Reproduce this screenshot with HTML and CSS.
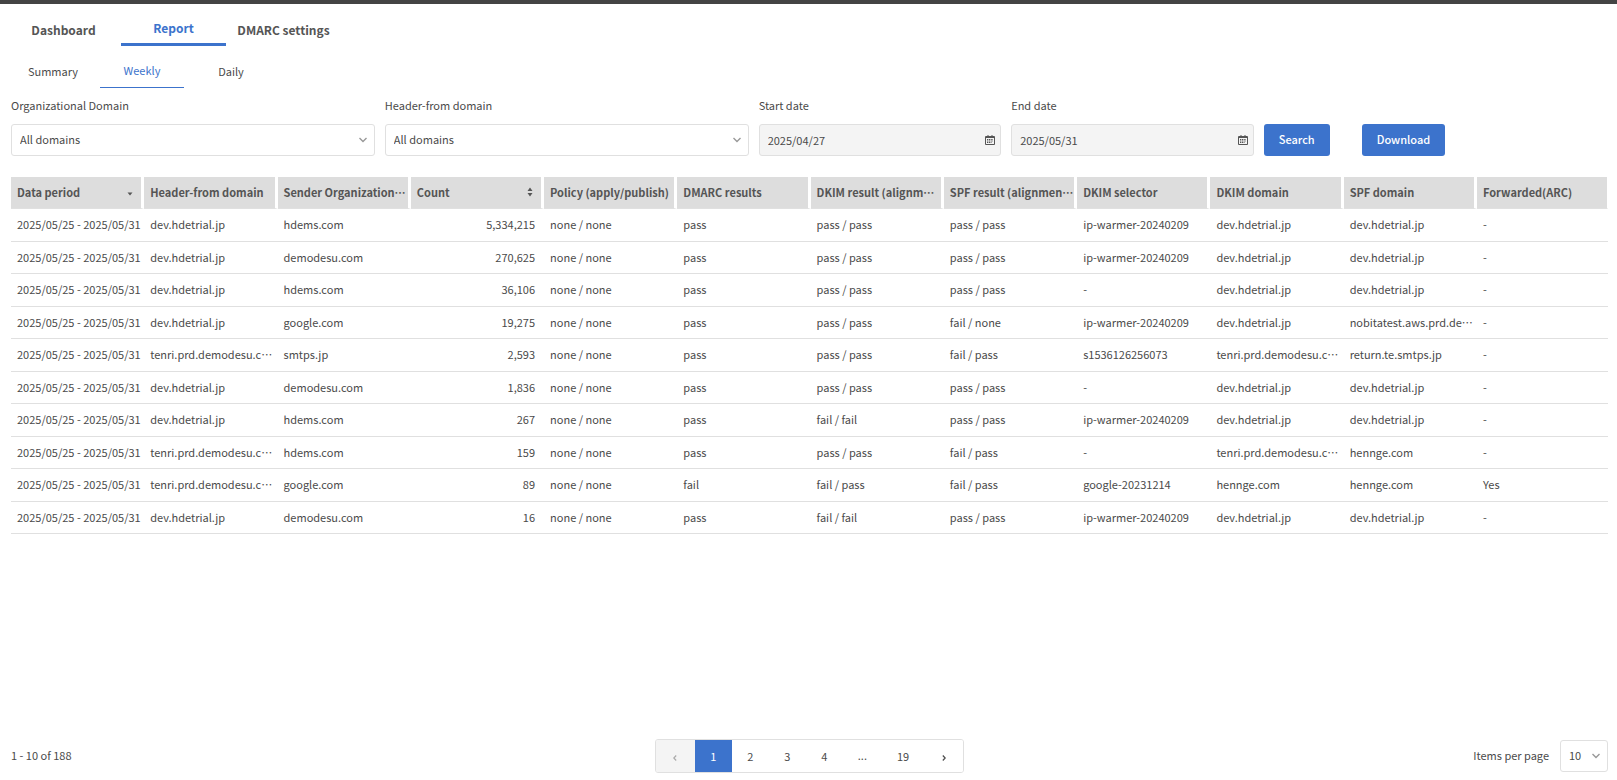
FILE: index.html
```html
<!DOCTYPE html>
<html lang="ja">
<head>
    <meta charset="utf-8">
    <title>DMARC report</title>
    <link rel="stylesheet" href="styles.css">
</head>
<body>
    <nav class="tabs">
        <a class="tab" href="#">Dashboard</a>
        <a class="tab active" href="#">Report</a>
        <a class="tab" href="#">DMARC settings</a>
    </nav>
    <nav class="subtabs">
        <a class="subtab" href="#">Summary</a>
        <a class="subtab active" href="#">Weekly</a>
        <a class="subtab" href="#">Daily</a>
    </nav>

    <form class="filters">
        <div class="field">
            <label for="org">Organizational Domain</label>
            <div class="control">
                <select id="org"><option>All domains</option></select>
                <svg class="chevron" viewBox="0 0 8 6"><path d="M.5 1 4 4.5 7.5 1"/></svg>
            </div>
        </div>
        <div class="field">
            <label for="from">Header-from domain</label>
            <div class="control">
                <select id="from"><option>All domains</option></select>
                <svg class="chevron" viewBox="0 0 8 6"><path d="M.5 1 4 4.5 7.5 1"/></svg>
            </div>
        </div>
        <div class="field date">
            <label for="start">Start date</label>
            <div class="control">
                <input type="text" id="start" value="2025/04/27">
                <svg class="calendar" viewBox="0 0 10 10"><path class="frame" d="M.5 1.5h9v8h-9zM.5 2.5h9M3 0v2M7 0v2"/><path class="days" d="M2 4.5h6M2 6h6M2 7.5h4.5"/></svg>
            </div>
        </div>
        <div class="field date">
            <label for="end">End date</label>
            <div class="control">
                <input type="text" id="end" value="2025/05/31">
                <svg class="calendar" viewBox="0 0 10 10"><path class="frame" d="M.5 1.5h9v8h-9zM.5 2.5h9M3 0v2M7 0v2"/><path class="days" d="M2 4.5h6M2 6h6M2 7.5h4.5"/></svg>
            </div>
        </div>
        <button type="button" class="btn">Search</button>
        <button type="button" class="btn download">Download</button>
    </form>

    <table class="report">
        <thead>
            <tr>
                <th><button class="sort">Data period<svg viewBox="0 0 6 10"><path d="M.5 5.5h5L3 8.5z"/></svg></button></th>
                <th>Header-from domain</th>
                <th>Sender Organization…</th>
                <th><button class="sort">Count<svg viewBox="0 0 6 10"><path d="M.5 4h5L3 .5zM.5 6h5L3 9.5z"/></svg></button></th>
                <th>Policy (apply/publish)</th>
                <th>DMARC results</th>
                <th>DKIM result (alignm…</th>
                <th>SPF result (alignmen…</th>
                <th>DKIM selector</th>
                <th>DKIM domain</th>
                <th>SPF domain</th>
                <th>Forwarded(ARC)</th>
            </tr>
        </thead>
        <tbody>
            <tr><td>2025/05/25 - 2025/05/31</td><td>dev.hdetrial.jp</td><td>hdems.com</td><td class="num">5,334,215</td><td>none / none</td><td>pass</td><td>pass / pass</td><td>pass / pass</td><td>ip-warmer-20240209</td><td>dev.hdetrial.jp</td><td>dev.hdetrial.jp</td><td>-</td></tr>
            <tr><td>2025/05/25 - 2025/05/31</td><td>dev.hdetrial.jp</td><td>demodesu.com</td><td class="num">270,625</td><td>none / none</td><td>pass</td><td>pass / pass</td><td>pass / pass</td><td>ip-warmer-20240209</td><td>dev.hdetrial.jp</td><td>dev.hdetrial.jp</td><td>-</td></tr>
            <tr><td>2025/05/25 - 2025/05/31</td><td>dev.hdetrial.jp</td><td>hdems.com</td><td class="num">36,106</td><td>none / none</td><td>pass</td><td>pass / pass</td><td>pass / pass</td><td>-</td><td>dev.hdetrial.jp</td><td>dev.hdetrial.jp</td><td>-</td></tr>
            <tr><td>2025/05/25 - 2025/05/31</td><td>dev.hdetrial.jp</td><td>google.com</td><td class="num">19,275</td><td>none / none</td><td>pass</td><td>pass / pass</td><td>fail / none</td><td>ip-warmer-20240209</td><td>dev.hdetrial.jp</td><td>nobitatest.aws.prd.de…</td><td>-</td></tr>
            <tr><td>2025/05/25 - 2025/05/31</td><td>tenri.prd.demodesu.c…</td><td>smtps.jp</td><td class="num">2,593</td><td>none / none</td><td>pass</td><td>pass / pass</td><td>fail / pass</td><td>s1536126256073</td><td>tenri.prd.demodesu.c…</td><td>return.te.smtps.jp</td><td>-</td></tr>
            <tr><td>2025/05/25 - 2025/05/31</td><td>dev.hdetrial.jp</td><td>demodesu.com</td><td class="num">1,836</td><td>none / none</td><td>pass</td><td>pass / pass</td><td>pass / pass</td><td>-</td><td>dev.hdetrial.jp</td><td>dev.hdetrial.jp</td><td>-</td></tr>
            <tr><td>2025/05/25 - 2025/05/31</td><td>dev.hdetrial.jp</td><td>hdems.com</td><td class="num">267</td><td>none / none</td><td>pass</td><td>fail / fail</td><td>pass / pass</td><td>ip-warmer-20240209</td><td>dev.hdetrial.jp</td><td>dev.hdetrial.jp</td><td>-</td></tr>
            <tr><td>2025/05/25 - 2025/05/31</td><td>tenri.prd.demodesu.c…</td><td>hdems.com</td><td class="num">159</td><td>none / none</td><td>pass</td><td>pass / pass</td><td>fail / pass</td><td>-</td><td>tenri.prd.demodesu.c…</td><td>hennge.com</td><td>-</td></tr>
            <tr><td>2025/05/25 - 2025/05/31</td><td>tenri.prd.demodesu.c…</td><td>google.com</td><td class="num">89</td><td>none / none</td><td>fail</td><td>fail / pass</td><td>fail / pass</td><td>google-20231214</td><td>hennge.com</td><td>hennge.com</td><td>Yes</td></tr>
            <tr><td>2025/05/25 - 2025/05/31</td><td>dev.hdetrial.jp</td><td>demodesu.com</td><td class="num">16</td><td>none / none</td><td>pass</td><td>fail / fail</td><td>pass / pass</td><td>ip-warmer-20240209</td><td>dev.hdetrial.jp</td><td>dev.hdetrial.jp</td><td>-</td></tr>
        </tbody>
    </table>

    <footer class="footer">
        <div class="range">1 - 10 of 188</div>
        <div class="pagination">
            <button class="page arrow" disabled aria-label="Previous"><svg viewBox="0 0 4 6"><path d="M3.2.5.8 3l2.4 2.5"/></svg></button>
            <button class="page current">1</button>
            <button class="page">2</button>
            <button class="page">3</button>
            <button class="page">4</button>
            <span class="page">...</span>
            <button class="page">19</button>
            <button class="page arrow" aria-label="Next"><svg viewBox="0 0 4 6"><path d="M.8.5 3.2 3 .8 5.5"/></svg></button>
        </div>
        <div class="perpage">
            <label for="perpage">Items per page</label>
            <div class="control">
                <select id="perpage"><option>10</option></select>
                <svg class="chevron" viewBox="0 0 8 6"><path d="M.5 1 4 4.5 7.5 1"/></svg>
            </div>
        </div>
    </footer>
</body>
</html>
```
FILE: styles.css
```css
* {
    box-sizing: border-box;
}

body {
    display: flex;
    flex-direction: column;
    min-height: 100vh;
    margin: 0;
    padding: 10px 9px 7px 11px;
    border-top: 4px solid #444;
    background-color: #fff;
    color: #4a4a4a;
    font-family: "Noto Sans CJK JP", sans-serif;
    font-size: 11px;
    line-height: 16px;
}

button, select, input {
    font: inherit;
    color: inherit;
}

button {
    border: none;
    cursor: pointer;
}

a {
    color: inherit;
    text-decoration: none;
}

.tabs, .subtabs {
    display: flex;
    gap: 5px;
    text-align: center;
    white-space: nowrap;
}

.tab {
    width: 105px;
    height: 32px;
    color: #555;
    font-size: 12px;
    font-weight: bold;
    line-height: 32px;
}

.tab.active {
    border-bottom: 3px solid #3c73cc;
    color: #3c73cc;
    line-height: 28px;
}

.subtabs {
    margin-top: 10px;
}

.subtab {
    width: 84px;
    height: 32px;
    line-height: 30px;
}

.subtab.active {
    border-bottom: 1px solid #3c73cc;
    color: #3c73cc;
    line-height: 28px;
}

.filters {
    display: flex;
    align-items: flex-end;
    gap: 10px;
    margin-top: 9px;
}

.field {
    width: 22.5vw;
}

.field.date {
    width: 15vw;
}

.field label {
    display: block;
    margin-bottom: 11px;
}

.control {
    position: relative;
}

.control select, .control input {
    display: block;
    width: 100%;
    height: 32px;
    padding: 0 8px;
    border: 1px solid #e0e0e0;
    border-radius: 3px;
    background-color: #fff;
    appearance: none;
}

.control select {
    padding-bottom: 2px;
}

.control input {
    background-color: #f4f4f4;
}

.chevron, .calendar {
    position: absolute;
    top: 13px;
    right: 8px;
    width: 8px;
    height: 6px;
    fill: none;
    stroke: #999;
    stroke-width: 1.4;
    pointer-events: none;
}

.calendar {
    top: 11px;
    right: 6px;
    width: 10px;
    height: 10px;
    stroke: #555;
    stroke-width: 1;
}

.calendar .days {
    stroke-dasharray: 1.2 .6;
}

.btn {
    height: 32px;
    padding: 0 15px 2px;
    border-radius: 3px;
    background-color: #3c73cc;
    color: #fff;
    font-weight: 500;
}

.download {
    margin-left: 22px;
}

.report {
    width: 100%;
    margin-top: 21px;
    border-collapse: separate;
    border-spacing: 0;
    table-layout: fixed;
}

.report th, .report td {
    overflow: hidden;
    height: 32px;
    padding: 0 2px 2px 6px;
    border-bottom: 1px solid #e0e0e0;
    text-align: left;
    text-overflow: ellipsis;
    white-space: nowrap;
}

/* keeps the average row at 32.5px */
.report tr:nth-child(odd) td {
    height: 33px;
}

.report th {
    padding-right: 0;
    border-right: 3px solid #fff;
    background-color: #ddd;
    color: #555;
}

.report th:last-child {
    width: 131px;
    border-right-width: 1px;
}

.report .num {
    padding-right: 9px;
    text-align: right;
}

.sort {
    display: flex;
    align-items: center;
    justify-content: space-between;
    width: 100%;
    padding: 0 8px 0 0;
    background: none;
}

.sort svg {
    width: 6px;
    height: 10px;
    fill: #555;
}

.footer {
    display: grid;
    grid-template-columns: 1fr auto 1fr;
    align-items: center;
    margin-top: auto;
}

.range, .perpage label {
    padding-bottom: 2px;
}

.pagination {
    display: flex;
    overflow: hidden;
    height: 34px;
    border: 1px solid #e0e0e0;
    border-radius: 3px;
}

.page {
    min-width: 37px;
    padding: 0 15px;
    background-color: #fff;
    line-height: 30px;
    text-align: center;
}

.page.arrow {
    min-width: 39px;
}

.page:disabled {
    background-color: #f4f4f4;
    color: #aaa;
}

.page.current {
    background-color: #3c73cc;
    color: #fff;
}

.page svg {
    width: 4px;
    height: 6px;
    fill: none;
    stroke: currentColor;
    stroke-width: 1.2;
}

.perpage {
    display: flex;
    align-items: center;
    justify-content: flex-end;
    gap: 11px;
}

.perpage .control {
    width: 48px;
}
```
